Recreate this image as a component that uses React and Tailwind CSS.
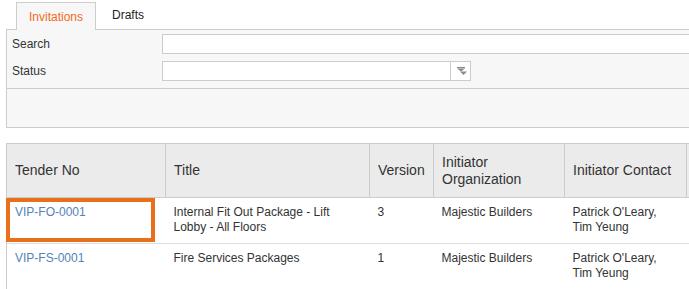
import React from "react";

const rows = [
  {
    no: "VIP-FO-0001",
    title: "Internal Fit Out Package - Lift Lobby - All Floors",
    version: "3",
    org: "Majestic Builders",
    contact: "Patrick O'Leary, Tim Yeung",
    marked: true,
  },
  {
    no: "VIP-FS-0001",
    title: "Fire Services Packages",
    version: "1",
    org: "Majestic Builders",
    contact: "Patrick O'Leary, Tim Yeung",
  },
];

const DropIcon = () => (
  <svg width="10" height="9" viewBox="0 0 10 9" fill="#8a8a8a">
    <rect x="0" y="0" width="8" height="1.2" />
    <polygon points="0,1.6 8,1.6 4,4.6" />
    <polygon points="3,4.4 10,4.4 6.5,8" />
  </svg>
);

export default function App() {
  return (
    <div
      className="w-[689px] h-[289px] overflow-hidden bg-white text-[#333] text-[12px]"
      style={{ fontFamily: '"Liberation Sans", Arial, sans-serif' }}
    >
      {/* Tabs */}
      <div className="flex items-end pl-[16px] h-[29px]">
        <div className="relative z-10 -mb-px w-[80px] h-[28px] border border-b-0 border-[#ccc] bg-[#f7f7f7] flex items-center justify-center text-[#f26a21]">
          Invitations
        </div>
        <div className="h-[28px] w-[64px] flex items-center justify-center text-[#222]">
          Drafts
        </div>
      </div>

      {/* Filter panel */}
      <div className="ml-[6px] w-[700px] border-l border-t border-b border-[#ccc] bg-[#f7f7f7]">
        <div className="pl-[5px] pt-[4px] pb-[7px] flex flex-col gap-[7px] border-b border-[#ccc]">
          <div className="flex items-center h-[20px]">
            <div className="w-[150px]">Search</div>
            <div className="flex-1 h-[20px] border border-[#ccc] bg-white" />
          </div>
          <div className="flex items-center h-[20px]">
            <div className="w-[150px]">Status</div>
            <div className="w-[309px] h-[20px] border border-[#ccc] bg-white flex justify-end">
              <div className="w-[20px] h-full border-l border-[#ccc] flex items-center justify-center pl-[2px]">
                <DropIcon />
              </div>
            </div>
          </div>
        </div>
        <div className="h-[38px]" />
      </div>

      {/* Table */}
      <table className="ml-[6px] mt-[15px] table-fixed border-collapse w-[880px]">
        <colgroup>
          <col className="w-[159px]" />
          <col className="w-[204px]" />
          <col className="w-[64px]" />
          <col className="w-[131px]" />
          <col className="w-[122px]" />
          <col className="w-[200px]" />
        </colgroup>
        <thead>
          <tr className="h-[54px] bg-[#ebebeb] text-[14px] leading-[17px] text-[#333]">
            {["Tender No", "Title", "Version", "Initiator Organization", "Initiator Contact", ""].map(
              (h, i) => (
                <th
                  key={i}
                  className="border border-[#ccc] px-[8px] text-left font-normal align-middle"
                >
                  {h === "Initiator Organization" ? (
                    <>
                      Initiator
                      <br />
                      Organization
                    </>
                  ) : (
                    h
                  )}
                </th>
              )
            )}
          </tr>
        </thead>
        <tbody className="leading-[15px]">
          {rows.map((r) => (
            <tr key={r.no} className="h-[46px] border-b border-[#ddd]">
              <td className="relative border-l border-[#ccc] px-[8px] pt-[7px] pb-[8px] align-top">
                <span className="text-[#5283b8]">{r.no}</span>
                {r.marked && (
                  <div className="absolute left-[-1px] top-0 w-[149px] h-[44px] border-[4px] border-[#e8701a]" />
                )}
              </td>
              <td className="px-[8px] pt-[7px] pb-[8px] align-top">{r.title}</td>
              <td className="px-[8px] pt-[7px] pb-[8px] align-top">{r.version}</td>
              <td className="px-[8px] pt-[7px] pb-[8px] align-top">{r.org}</td>
              <td className="px-[8px] pt-[7px] pb-[8px] align-top">{r.contact}</td>
              <td />
            </tr>
          ))}
        </tbody>
      </table>
    </div>
  );
}
